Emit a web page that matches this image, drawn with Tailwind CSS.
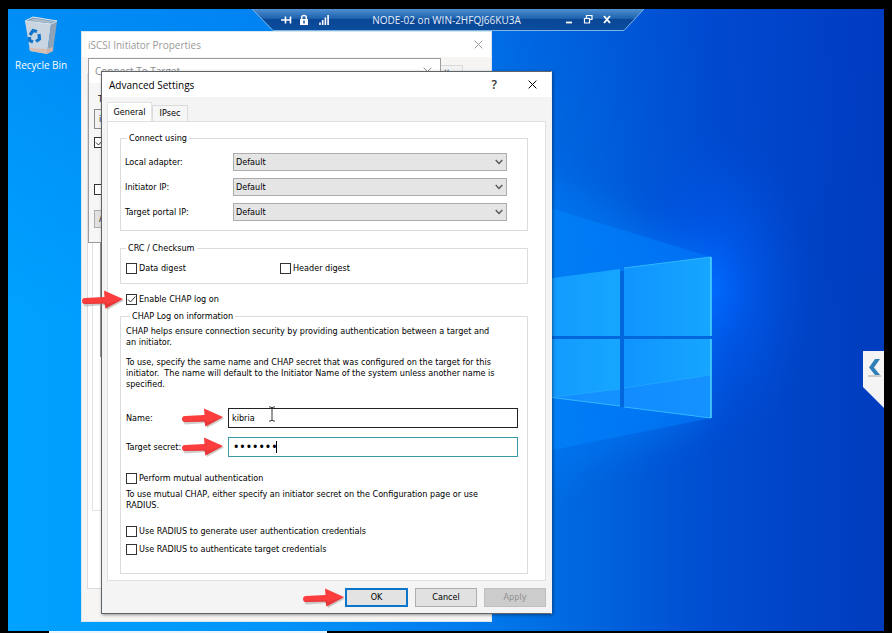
<!DOCTYPE html>
<html lang="en">
<head>
  <meta charset="UTF-8" />
  <meta name="viewport" content="width=device-width, initial-scale=1.0"/>
  <title>NODE-02 on WIN-2HFQJ66KU3A</title>
  <script src="https://cdn.jsdelivr.net/npm/@tailwindcss/browser@4"></script>
</head>
<body class="bg-black">
  <!-- shared arrow marker -->
  <svg class="hidden">
    <symbol id="arrow" viewBox="0 0 42 20">
      <path d="M3 10.5 L24 9 L23 3 L42 10.5 L25 20 L24.500 15 L3 16.500 Q0 14 3 10.500Z" fill="#9a8f8f" opacity=".45"/>
      <path d="M3 8 Q0 8 0 11 Q0 14 3 14 L22.500 13.500 L23.500 18.500 L41 9 L22 .5 L22.500 7 Z" fill="#fb3d3d"/>
      <path d="M1 13 Q2 14 3 14 L22.500 13.500 L23.500 18.500 L41 9 L25 14 L24 12 Z" fill="#d93636" opacity=".6"/>
    </symbol>
    <symbol id="close" viewBox="0 0 10 10">
      <path d="M.7 .7 L9.300 9.300 M9.300 .7 L.7 9.300" fill="none" stroke="currentColor" stroke-width="1.100"/>
    </symbol>
    <symbol id="tick" viewBox="0 0 11 11">
      <path d="M2 5.500 L4.500 8 L9.300 2.500" fill="none" stroke="#333" stroke-width="1"/>
    </symbol>
    <symbol id="chevron" viewBox="0 0 8 6">
      <path d="M.7 1 L4 4.500 L7.300 1" fill="none" stroke="currentColor" stroke-width="1.300"/>
    </symbol>
  </svg>

  <div class="min-h-screen flex flex-col pt-[9px]">
    <main class="relative flex-1 mx-2 overflow-hidden bg-[#009cff] font-['Open_Sans',sans-serif] text-[10px] leading-3">

      <!-- wallpaper -->
      <svg class="absolute inset-0 w-full h-full" viewBox="0 0 876 622" preserveAspectRatio="none">
        <defs>
          <linearGradient id="sky" x1="0" y1="0" x2="1" y2="0">
            <stop offset="0" stop-color="#00a2ff"/>
            <stop offset=".3" stop-color="#0094fa"/>
            <stop offset=".55" stop-color="#0078ea"/>
            <stop offset=".66" stop-color="#0066de"/>
            <stop offset=".8" stop-color="#004dd0"/>
            <stop offset=".92" stop-color="#0042c4"/>
            <stop offset="1" stop-color="#003cbe"/>
          </linearGradient>
          <linearGradient id="top" x1="0" y1="0" x2="0" y2="1">
            <stop offset="0" stop-color="#003cd0" stop-opacity=".2"/>
            <stop offset=".5" stop-color="#003cd0" stop-opacity="0"/>
          </linearGradient>
          <radialGradient id="glow">
            <stop offset="0" stop-color="#0068ff"/>
            <stop offset=".4" stop-color="#005cf0" stop-opacity=".6"/>
            <stop offset="1" stop-color="#0050e0" stop-opacity="0"/>
          </radialGradient>
          <linearGradient id="beam" x1="0" y1="0" x2="1" y2="0">
            <stop offset="0" stop-color="#0088fc"/>
            <stop offset="1" stop-color="#0078fa"/>
          </linearGradient>
          <linearGradient id="pane" x1="0" y1="0" x2="1" y2="0">
            <stop offset="0" stop-color="#1094ff"/>
            <stop offset="1" stop-color="#16a6ff"/>
          </linearGradient>
          <filter id="soft" x="-30%" y="-30%" width="160%" height="160%"><feGaussianBlur stdDeviation="16"/></filter>
        </defs>
        <rect width="876" height="622" fill="url(#sky)"/>
        <rect width="876" height="622" fill="url(#top)"/>
        <ellipse cx="705" cy="280" rx="100" ry="160" fill="url(#glow)"/>
        <path d="M460 130 L695 246 V412 L460 500Z" fill="#0078f4" opacity=".6" filter="url(#soft)"/>
        <path d="M500 186 L703 248 V409 L500 450Z" fill="url(#beam)" opacity=".6"/>
        <path d="M612 262 H616 V327 H703 V330 H616 V398 H612 V330 H500 V327 H612Z" fill="#0068dc"/>
        <g fill="url(#pane)">
          <path d="M500 275 L612 260 V327 H500Z"/>
          <path d="M616 259 L703 248 V327 H616Z"/>
          <path d="M500 330 H612 V397 L500 383Z"/>
          <path d="M616 330 H703 V409 L616 398Z"/>
        </g>
        <path d="M545 388 L612 380 V397 L545 389Z M616 379 L703 366 V409 L616 398Z" fill="#1487ff" opacity=".65"/>
        <path d="M545 388 L612 380 M616 379 L703 366" stroke="#2cb4ff" opacity=".5"/>
        <path d="M616 259 L703 248 M500 383 L612 397 M616 398 L703 409" fill="none" stroke="#30b8ff"/>
        <path d="M703 248 V327 M703 330 V409" stroke="#4fd8ff" stroke-width="1.500"/>
      </svg>

      <!-- desktop shortcut -->
      <div class="relative inline-flex flex-col items-center gap-1 px-[7px] pt-1.5 text-white">
        <svg class="w-9 h-10" viewBox="0 0 36 40">
          <path d="M2 6 L28 9 L24 39 L7 36Z" fill="#c9d6e2"/>
          <path d="M28 9 L34 6 L30 36 L24 39Z" fill="#8fa3b8"/>
          <path d="M2 6 L10 2 L34 6 L28 9Z" fill="#7e9cb8" stroke="#dfe8ef"/>
          <path d="M6 6 L11 3.500 L30 6.500 L27 8Z" fill="#a9bccb"/>
          <path d="M6 33 L24 34 L30 32 L30 36 L24 39 L7 36Z" fill="#d9b8a6" opacity=".8"/>
          <g fill="none" stroke="#1274c8" stroke-width="3.200">
            <path d="M7 20 L10 15.500 L14 16.500"/>
            <path d="M16 19 L16.500 24 L13 26.500"/>
            <path d="M10 27 L6.500 25.500 L6.500 22"/>
          </g>
        </svg>
        <span>Recycle Bin</span>
      </div>

      <!-- iSCSI Initiator Properties -->
      <section class="absolute left-[73px] top-[22px] w-[411px] h-[591px] flex flex-col bg-[#f7f5f4] border border-[#d8e6ee] text-[#9a9a9a]">
        <header class="flex items-center justify-between h-[25px] pl-1.5 pr-2 bg-white">
          <h2>iSCSI Initiator Properties</h2>
          <button aria-label="Close properties"><svg class="w-[9px] h-[9px]"><use href="#close"/></svg></button>
        </header>
        <div class="flex justify-end pt-2 pr-7">
          <span class="w-[24px] h-2 pl-1 border border-b-0 border-[#d9d9d9] bg-[#f3f3f3] text-[#555] leading-[2px]">..</span>
        </div>
        <div class="flex-1 ml-[5px] mr-1.5 border border-[#dcdcdc] bg-white pl-1 pb-[77px] flex">
          <div class="flex-1 border-l border-b border-[#e2e2e2] pt-[160px] pl-[7px]">
            <div class="h-[123px] border-l-2 border-b border-[#9a9a9a]"></div>
          </div>
        </div>
        <footer class="flex justify-end gap-[7px] pt-1.5 pb-[7px] pr-1.5">
          <button aria-label="OK" class="w-[62px] h-[19px] border border-[#adadad] bg-[#e1e1e1]"></button>
          <button aria-label="Cancel" class="w-[62px] h-[19px] border border-[#adadad] bg-[#e1e1e1]"></button>
          <button aria-label="Apply" class="w-[62px] h-[19px] border border-[#adadad] bg-[#e1e1e1]"></button>
        </footer>
      </section>

      <!-- Connect To Target -->
      <section class="absolute left-[80px] top-[49px] w-[353px] h-[185px] bg-[#f6f6f6] border border-[#9c9c9c] text-[#8d8d8d]">
        <header class="flex items-center justify-between h-[24px] pl-1.5 pr-2 bg-white">
          <h2>Connect To Target</h2>
          <button aria-label="Close target"><svg class="w-[9px] h-[9px]"><use href="#close"/></svg></button>
        </header>
        <div class="flex flex-col items-start pl-[5px] pt-2.5 font-['DejaVu_Sans_Condensed','DejaVu_Sans',sans-serif] text-[9px] text-[#222]">
          <label for="iqn" class="pl-1">T</label>
          <input id="iqn" value="i" class="mt-1 w-40 h-5 px-1 border border-[#8a8a8a] bg-[#f2f2f2]">
          <span class="grid mt-2 size-[11px]">
            <input type="checkbox" checked aria-label="Favorite" class="peer appearance-none col-start-1 row-start-1 size-[11px] border border-[#333] bg-white">
            <svg class="col-start-1 row-start-1 size-[11px] pointer-events-none"><use href="#tick"/></svg>
          </span>
          <input type="checkbox" aria-label="Multi-path" class="mt-9 appearance-none size-[11px] border border-[#333] bg-white">
          <button class="mt-[15px] w-20 h-[18px] pl-1 text-left border border-[#adadad] bg-[#e1e1e1]">A</button>
        </div>
      </section>

      <!-- Advanced Settings -->
      <section class="absolute left-[93px] top-[62px] w-[451px] bg-[#f4f4f4] border border-[#5f6468] border-r-[#f3f0ee] shadow-[1px_1px_3px_rgba(0,0,0,0.4)] text-black">
        <header class="flex items-center h-[25px] pl-[7px] pr-3.5 bg-white">
          <h1 class="flex-1">Advanced Settings</h1>
          <button aria-label="Help" class="text-[12px] font-semibold leading-3 text-[#333] mr-[31px]">?</button>
          <button aria-label="Close"><svg class="w-[9px] h-[9px]"><use href="#close"/></svg></button>
        </header>

        <div class="px-[5px] pb-1.5 pt-[5px] font-['DejaVu_Sans_Condensed','DejaVu_Sans',sans-serif] text-[9px] leading-[11px]">
          <nav class="flex items-end">
            <button class="h-[19px] w-[45px] bg-white border border-b-0 border-[#e3e3e3]">General</button>
            <button class="h-4 w-9 bg-[#f6f6f6] border border-b-0 border-[#dcdcdc]">IPsec</button>
          </nav>

          <form class="bg-white border border-[#e0e0e0] pt-2.5 pb-1.5 pl-3 pr-[17px]">
            <fieldset class="border border-[#dcdcdc] pt-[9px] pb-[9px] pl-1 pr-5 flex flex-col gap-[7px]">
              <legend class="ml-0.5 px-0.5 leading-3">Connect using</legend>
              <div class="flex items-center">
                <label for="adapter" class="w-[108px]">Local adapter:</label>
                <div class="relative flex-1">
                  <select id="adapter" class="block appearance-none w-full h-[18px] px-0.5 border border-[#acacac] bg-[#e5e5e5]"><option>Default</option></select>
                  <svg class="absolute right-1 top-1.5 w-2 h-1.5 text-[#555] pointer-events-none"><use href="#chevron"/></svg>
                </div>
              </div>
              <div class="flex items-center">
                <label for="initiator" class="w-[108px]">Initiator IP:</label>
                <div class="relative flex-1">
                  <select id="initiator" class="block appearance-none w-full h-[18px] px-0.5 border border-[#acacac] bg-[#e5e5e5]"><option>Default</option></select>
                  <svg class="absolute right-1 top-1.5 w-2 h-1.5 text-[#555] pointer-events-none"><use href="#chevron"/></svg>
                </div>
              </div>
              <div class="flex items-center">
                <label for="portal" class="w-[108px]">Target portal IP:</label>
                <div class="relative flex-1">
                  <select id="portal" class="block appearance-none w-full h-[18px] px-0.5 border border-[#acacac] bg-[#e5e5e5]"><option>Default</option></select>
                  <svg class="absolute right-1 top-1.5 w-2 h-1.5 text-[#555] pointer-events-none"><use href="#chevron"/></svg>
                </div>
              </div>
            </fieldset>

            <fieldset class="mt-[11px] border border-[#dcdcdc] py-[9px] pl-[5px] flex">
              <legend class="px-0.5 leading-3">CRC / Checksum</legend>
              <label class="flex items-center gap-0.5 w-[154px]">
                <input type="checkbox" class="appearance-none size-[11px] border border-[#333] bg-white">
                Data digest
              </label>
              <label class="flex items-center gap-0.5">
                <input type="checkbox" class="appearance-none size-[11px] border border-[#333] bg-white">
                Header digest
              </label>
            </fieldset>

            <div class="mt-2.5 ml-1.5 flex">
              <label class="relative flex items-center gap-0.5">
                <input type="checkbox" checked class="peer appearance-none size-[11px] border border-[#333] bg-white">
                <svg class="absolute left-0 top-0 size-[11px] pointer-events-none hidden peer-checked:block"><use href="#tick"/></svg>
                Enable CHAP log on
                <svg class="absolute right-full top-1/2 -translate-y-1/2 mr-0.5 w-[42px] h-5"><use href="#arrow"/></svg>
              </label>
            </div>

            <fieldset class="mt-[5px] border border-[#dcdcdc] pt-1 pb-[18px] pl-[5px] pr-[9px]">
              <legend class="ml-1 px-0.5 leading-3">CHAP Log on information</legend>
              <p>CHAP helps ensure connection security by providing authentication between a target and<br>an initiator.</p>
              <p class="mt-[9px]">To use, specify the same name and CHAP secret that was configured on the target for this<br>initiator.&nbsp; The name will default to the Initiator Name of the system unless another name is<br>specified.</p>

              <div class="mt-[18px] flex items-center">
                <label for="name" class="w-[102px]">Name:</label>
                <div class="relative flex-1">
                  <input id="name" type="text" value="kibria" class="block w-full h-5 px-[3px] border border-[#222] bg-white">
                  <svg class="absolute right-full top-1/2 -translate-y-1/2 mr-1 w-[42px] h-5"><use href="#arrow"/></svg>
                  <svg class="absolute left-10 -top-0.5 w-2 h-4" viewBox="0 0 8 16"><path d="M1 1 H3 L4 2 L5 1 H7 M4 2 V14 M1 15 H3 L4 14 L5 15 H7" fill="none" stroke="#333"/></svg>
                </div>
              </div>
              <div class="mt-[9px] flex items-center">
                <label for="secret" class="w-[102px]">Target secret:</label>
                <div class="relative flex-1">
                  <input id="secret" type="password" value="kibria1" class="block w-full h-5 px-1 border border-[#3a9aa5] bg-white text-[12px]">
                  <svg class="absolute right-full top-1/2 -translate-y-1/2 mr-1 w-[42px] h-5"><use href="#arrow"/></svg>
                  <span class="absolute left-12 top-1 w-px h-3 bg-black"></span>
                </div>
              </div>

              <label class="mt-4 flex items-center gap-0.5">
                <input type="checkbox" class="appearance-none size-[11px] border border-[#333] bg-white">
                Perform mutual authentication
              </label>
              <p class="mt-[5px]">To use mutual CHAP, either specify an initiator secret on the Configuration page or use<br>RADIUS.</p>

              <label class="mt-[15px] flex items-center gap-0.5">
                <input type="checkbox" class="appearance-none size-[11px] border border-[#333] bg-white">
                Use RADIUS to generate user authentication credentials
              </label>
              <label class="mt-[7px] flex items-center gap-0.5">
                <input type="checkbox" class="appearance-none size-[11px] border border-[#333] bg-white">
                Use RADIUS to authenticate target credentials
              </label>
            </fieldset>
          </form>

          <footer class="mt-[7px] flex justify-end gap-[7px]">
            <div class="relative">
              <button class="block w-[63px] h-[19px] border-2 border-[#0a74c8] bg-[#e3e3e3]">OK</button>
              <svg class="absolute right-full top-1/2 -translate-y-1/2 w-[42px] h-5"><use href="#arrow"/></svg>
            </div>
            <button class="w-[62px] h-[19px] border border-[#adadad] bg-[#e1e1e1]">Cancel</button>
            <button disabled class="w-[62px] h-[19px] border border-[#bfbfbf] bg-[#cccccc] text-[#8f8f8f]">Apply</button>
          </footer>
        </div>
      </section>

      <!-- remote session bar -->
      <div class="absolute top-0 inset-x-0 flex justify-center pl-1 text-white">
        <div class="relative w-[392px] h-[23px]">
          <svg class="absolute inset-0 w-full h-full" viewBox="0 0 392 23" preserveAspectRatio="none">
            <defs>
              <linearGradient id="bar" x1="0" y1="0" x2="0" y2="1">
                <stop offset="0" stop-color="#4f8fd0"/>
                <stop offset=".45" stop-color="#1e62ae"/>
                <stop offset=".5" stop-color="#0a4796"/>
                <stop offset="1" stop-color="#0a4c9c"/>
              </linearGradient>
            </defs>
            <path d="M0 0 H392 L372 21 H21Z" fill="url(#bar)"/>
            <path d="M0 0 L21 21.500 H372 L392 0" fill="none" stroke="#7db4e4"/>
          </svg>
          <div class="relative flex items-center h-[21px] pl-7 pr-[31px]">
            <button aria-label="Pin"><svg class="w-3 h-3" viewBox="0 0 12 12"><path d="M1 6 H5 M5.500 2.500 V9.500 M6 6 H10 M10.500 2.500 V9.500" fill="none" stroke="#fff" stroke-width="1.600"/></svg></button>
            <button aria-label="Security" class="ml-1.5"><svg class="w-3 h-3" viewBox="0 0 12 12"><path d="M3.700 5.500 V3.500 Q3.700 1.500 6 1.500 Q8.300 1.500 8.300 3.500 V5.500" fill="none" stroke="#fff" stroke-width="1.400"/><path d="M2 5 H10 V11 H2Z" fill="#fff"/><path d="M6 6.500 V9.500" stroke="#0a4796" stroke-width="1.400"/></svg></button>
            <button aria-label="Signal" class="ml-2"><svg class="w-3 h-3" viewBox="0 0 12 12"><path d="M2 11 V8.500 M4.700 11 V6 M7.400 11 V3.500 M10.100 11 V1" stroke="#fff" stroke-width="1.600"/></svg></button>
            <span class="flex-1 text-center text-[#e4eefa]">NODE-02 on WIN-2HFQJ66KU3A</span>
            <button aria-label="Minimize"><svg class="w-3 h-3" viewBox="0 0 12 12"><path d="M3 8.500 H9" stroke="#fff" stroke-width="1.800"/></svg></button>
            <button aria-label="Restore" class="ml-[7px]"><svg class="w-3 h-3" viewBox="0 0 12 12"><path d="M4.500 4 V1.500 H10 V5.500 H8" fill="none" stroke="#fff" stroke-width="1.200"/><path d="M2.500 4.500 H7.500 V9 H2.500Z" fill="none" stroke="#fff" stroke-width="1.200"/></svg></button>
            <button aria-label="Disconnect" class="ml-[7px]"><svg class="w-3 h-3" viewBox="0 0 12 12"><path d="M3 2 L9 9 M9 2 L3 9" stroke="#fff" stroke-width="1.900"/></svg></button>
          </div>
        </div>
      </div>

      <!-- side handle -->
      <button aria-label="Open side panel" class="absolute right-0 top-[342px]">
        <svg class="w-[21px] h-[57px]" viewBox="0 0 21 57">
          <path d="M0 0 H21 V57 L0 36Z" fill="#f4f4f4"/>
          <path d="M12 8 H17 L11 16.500 L17 24 H12 L6 16.500Z" fill="#2f7fb8"/>
          <path d="M5 25 H18" stroke="#a9a49c"/>
        </svg>
      </button>
    </main>
    <div class="flex h-0.5 pl-[49px] bg-black">
      <div class="w-[33%] bg-[#eaf4fc]"></div>
    </div>
  </div>
</body>
</html>
